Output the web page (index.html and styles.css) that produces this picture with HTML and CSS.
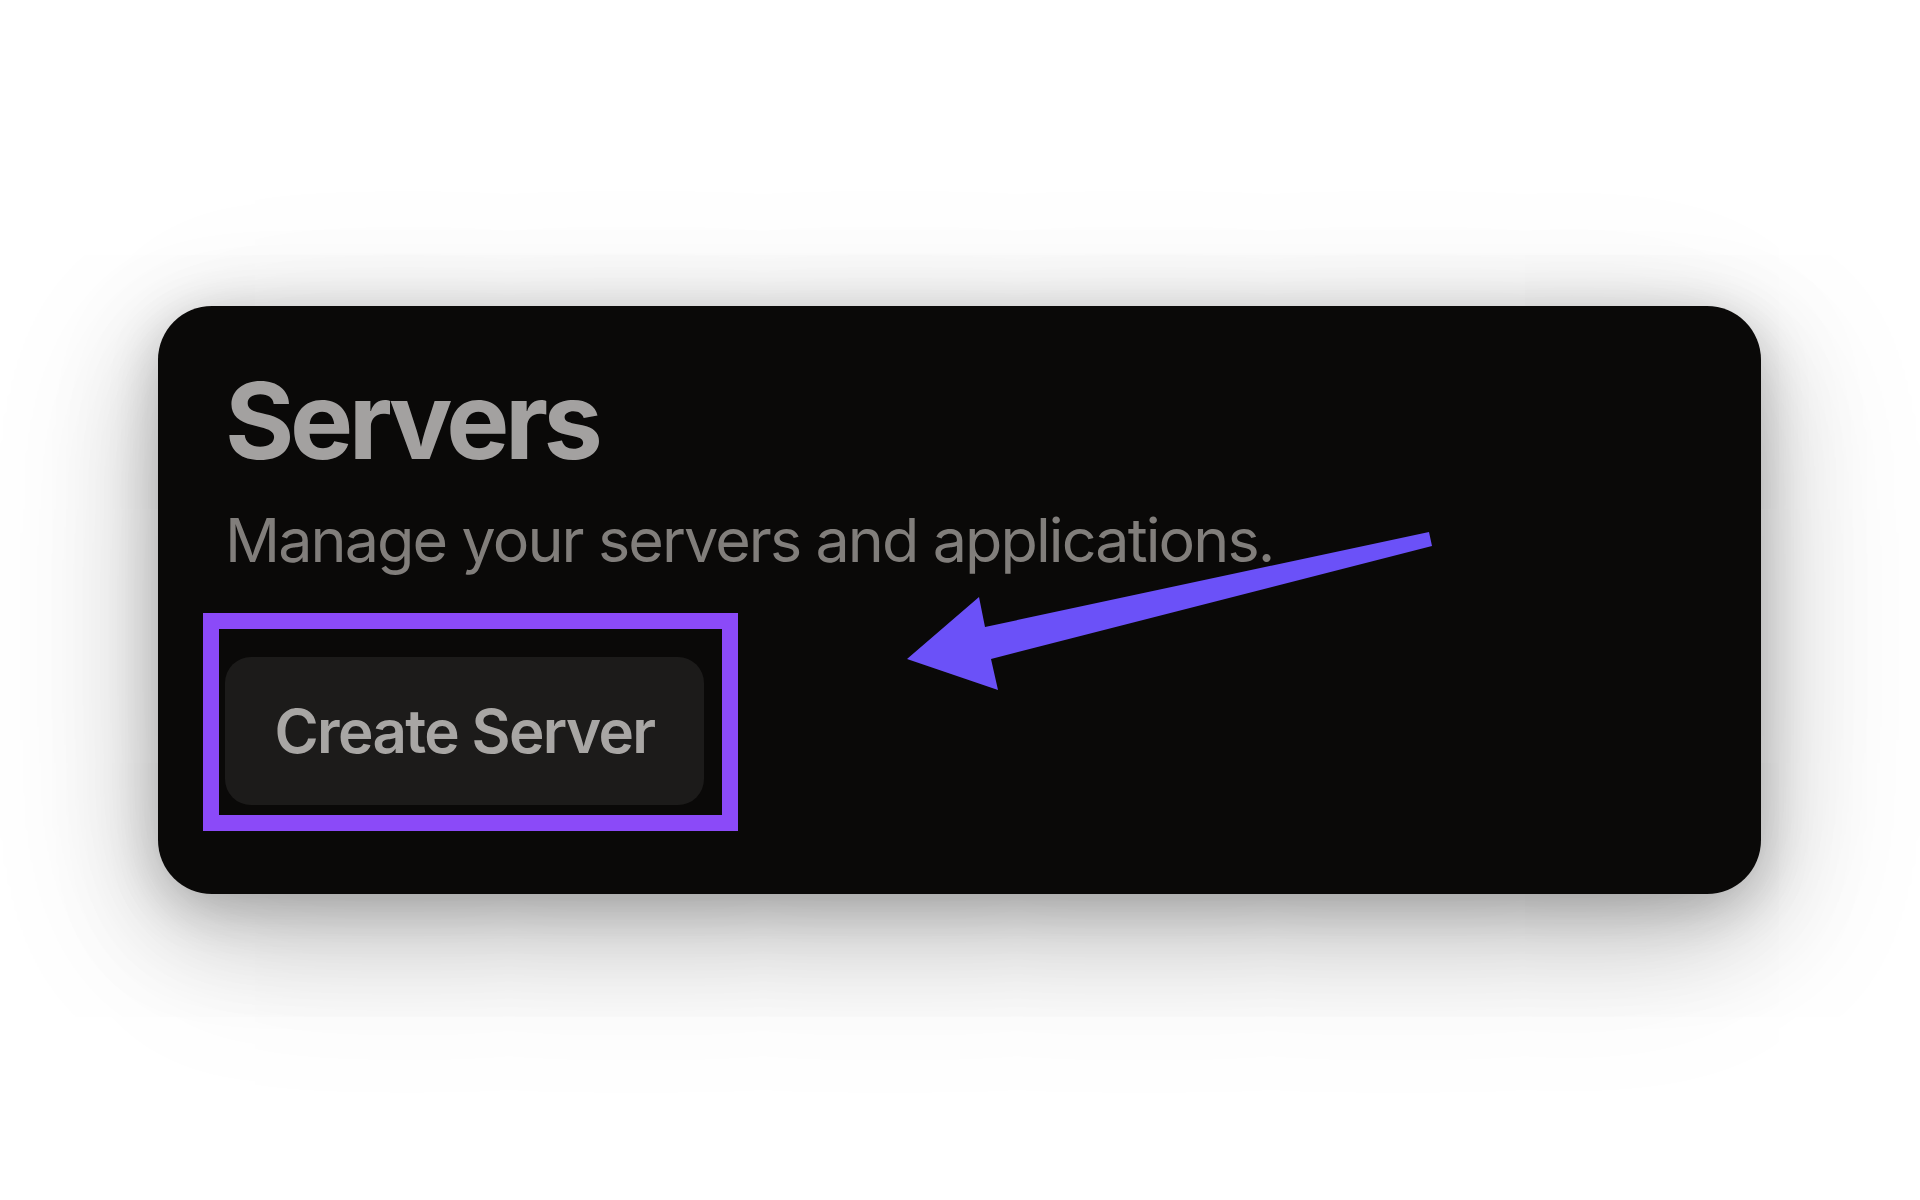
FILE: index.html
```html
<!DOCTYPE html>
<html lang="en">
<head>
<meta charset="utf-8">
<title>Servers</title>
<link rel="stylesheet" href="styles.css">
</head>
<body>
<div class="stage">
  <section class="card">
    <h1 class="title">Servers</h1>
    <p class="subtitle">Manage your servers and applications.</p>
    <button class="btn" type="button">Create Server</button>
    <div class="highlight"></div>
  </section>
</div>
<svg class="arrow" width="1920" height="1200" viewBox="0 0 1920 1200" aria-hidden="true">
  <polygon points="1429,532 1432,546 991,659 998,690 907,659 979,597 985,627" fill="#6b51f8"/>
</svg>
</body>
</html>
```

FILE: styles.css
```css
html, body {
  margin: 0;
  padding: 0;
  background: #ffffff;
  width: 1920px;
  height: 1200px;
  overflow: hidden;
  font-family: Inter, "Liberation Sans", sans-serif;
}

.stage {
  padding: 306px 0 0 158px;
}

.card {
  position: relative;
  box-sizing: border-box;
  width: 1603px;
  height: 588px;
  padding: 0 67px;
  background: #0a0908;
  border-radius: 54px;
  box-shadow:
    0 12px 50px rgba(0, 0, 0, 0.18),
    0 30px 110px rgba(0, 0, 0, 0.2),
    0 40px 180px rgba(0, 0, 0, 0.14);
  display: flex;
  flex-direction: column;
  align-items: flex-start;
}

.title {
  margin: 62px 0 0 0;
  font-size: 106px;
  line-height: 106px;
  font-weight: 700;
  letter-spacing: -0.042em;
  color: #a3a1a0;
}

.subtitle {
  margin: 30px 0 0 0;
  font-size: 61px;
  line-height: 72px;
  font-weight: 400;
  letter-spacing: -0.031em;
  color: #817e7b;
}

.btn {
  margin-top: 81px;
  width: 479px;
  height: 148px;
  padding: 0;
  border: none;
  border-radius: 26px;
  background: #1c1b1a;
  color: #a8a6a4;
  font-family: Inter, "Liberation Sans", sans-serif;
  font-size: 60px;
  font-weight: 600;
  letter-spacing: -0.027em;
}

.highlight {
  position: absolute;
  left: 45px;
  top: 307px;
  width: 535px;
  height: 218px;
  box-sizing: border-box;
  border: 16px solid #8b4af8;
}

.arrow {
  position: absolute;
  left: 0;
  top: 0;
  pointer-events: none;
}
```
